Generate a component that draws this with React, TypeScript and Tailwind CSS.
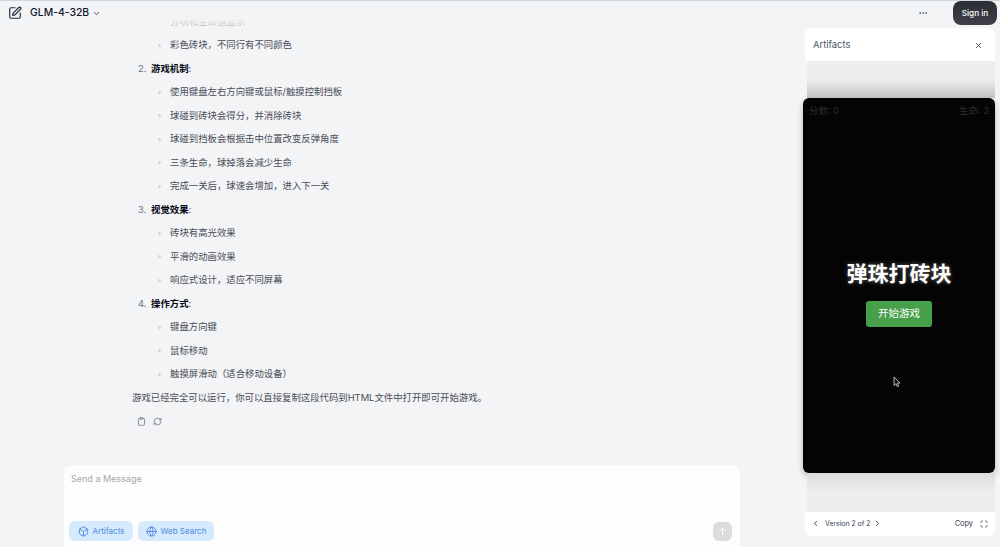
import React from 'react';
import { SquarePen, ChevronDown, ChevronLeft, ChevronRight, Ellipsis, X, Maximize, Clipboard, RefreshCw, Box, Globe, ArrowUp } from 'lucide-react';

const font = 'font-["Inter","Noto_Sans_CJK_SC",sans-serif]';

const sections = [
  { title: '游戏机制', items: ['使用键盘左右方向键或鼠标/触摸控制挡板', '球碰到砖块会得分，并消除砖块', '球碰到挡板会根据击中位置改变反弹角度', '三条生命，球掉落会减少生命', '完成一关后，球速会增加，进入下一关'] },
  { title: '视觉效果', items: ['砖块有高光效果', '平滑的动画效果', '响应式设计，适应不同屏幕'] },
  { title: '操作方式', items: ['键盘方向键', '鼠标移动', '触摸屏滑动（适合移动设备）'] },
];

function Bullet({ text }: { text: string }) {
  return (
    <div className="flex items-center h-[23.5px] pl-[26px]">
      <span className="w-[3px] h-[3px] rounded-full bg-gray-300 mr-[9px]" />
      <span className="text-[#484c57]">{text}</span>
    </div>
  );
}

export default function App() {
  return (
    <div className={`${font} w-[1000px] h-[547px] flex overflow-hidden bg-[#f3f4f6] border-t border-gray-300 text-[9.4px]`}>
      <div className="w-[803px] flex flex-col">
        <div className="relative z-10 h-[24px] shrink-0 flex items-center pl-[8px] bg-gradient-to-b from-[#f3f4f6] from-[75%] to-[#f3f4f6]/0">
          <SquarePen className="w-[14px] h-[14px] text-gray-800" />
          <span className="ml-[8px] text-[10.4px] font-medium text-gray-900">GLM-4-32B</span>
          <ChevronDown className="ml-[3px] w-[9px] h-[9px] text-gray-800" />
        </div>

        <div className="flex-1 min-h-0 -mt-[15px] pl-[132px] pr-[30px]">
          <div className="flex items-center h-[23.5px] pl-[38px] opacity-30">
            <span className="text-[#484c57]">方块和生命值显示</span>
          </div>
          <Bullet text="彩色砖块，不同行有不同颜色" />
          {sections.map((s, i) => (
            <div key={s.title}>
              <div className="flex items-center h-[23.5px] pl-[6px] text-[#484c57]">
                <span className="w-[13px] text-gray-500">{i + 2}.</span>
                <span className="font-bold text-gray-950">{s.title}</span>
                <span>:</span>
              </div>
              {s.items.map(item => <Bullet key={item} text={item} />)}
            </div>
          ))}
          <div className="flex items-center h-[23.5px] text-[#484c57]">
            游戏已经完全可以运行，你可以直接复制这段代码到HTML文件中打开即可开始游戏。
          </div>
          <div className="flex items-center gap-[7px] pl-[5px] h-[24px] text-gray-500">
            <Clipboard className="w-[9px] h-[9px]" />
            <RefreshCw className="w-[9px] h-[9px]" />
          </div>
        </div>

        {/* composer */}
        <div className="shrink-0 ml-[64px] mr-[63px] h-[82px] rounded-t-lg bg-[#fdfdfd] flex flex-col justify-between px-[5px] pt-[8px] pb-[6px]">
          <div className="pl-[2px] text-[9px] text-[#a3a7ae] leading-[12px]">Send a Message</div>
          <div className="flex items-center justify-between">
            <div className="flex gap-[5px] text-[8px] text-[#4f88dc]">
              <button className="h-[20px] w-[64px] rounded-md bg-[#d6eafe] flex items-center justify-center gap-[4px]">
                <Box className="w-[11px] h-[11px]" />
                Artifacts
              </button>
              <button className="h-[20px] w-[76px] rounded-md bg-[#d6eafe] flex items-center justify-center gap-[4px]">
                <Globe className="w-[11px] h-[11px]" />
                Web Search
              </button>
            </div>
            <button className="w-[19px] h-[19px] mr-[3px] rounded-md bg-[#dcdcdc] flex items-center justify-center">
              <ArrowUp className="w-[11px] h-[11px] text-white" />
            </button>
          </div>
        </div>
      </div>

      {/* artifacts panel */}
      <div className="w-[197px] flex flex-col relative">
        <div className="h-[26px] shrink-0 flex items-center justify-end gap-[25px] pr-[3px] -mt-[1px]">
          <Ellipsis className="w-[10px] h-[10px] text-gray-600" />
          <button className="w-[44px] h-[24px] rounded-lg bg-gradient-to-b from-[#2b2c33] to-[#3f4048] text-white text-[8.2px] font-medium">Sign in</button>
        </div>
        <div className="h-[33px] shrink-0 ml-[2px] mr-[5px] mt-[2px] pt-[1px] bg-white rounded-t-md flex items-center justify-between pl-[8px] pr-[12px] text-[9.4px] text-gray-600">
          Artifacts
          <X className="w-[9px] h-[9px] text-gray-800" />
        </div>
        <div className="h-[37px] shrink-0 ml-[4px] mr-[5px] bg-gradient-to-b from-[#eeeeee] via-[#eeeeee] to-[#c4c4c4]" />
        <div className="h-[375px] shrink-0 mr-[5px] bg-[#040404] rounded-md flex flex-col text-[#2e2e2e] shadow-[0_3px_6px_rgba(0,0,0,0.25)]">
          <div className="flex justify-between px-[6px] pt-[7px] text-[9.4px] leading-[12px]">
            <span>分数: 0</span>
            <span>生命: 3</span>
          </div>
          <div className="flex flex-col items-center mt-[143px]">
            <div className="text-[21px] leading-[28px] font-bold text-white [text-shadow:0_0_4px_rgba(255,255,255,0.4)]">弹珠打砖块</div>
            <button className="mt-[13px] w-[66px] h-[26px] rounded-[3px] bg-[#46a04a] text-white text-[10.5px]">开始游戏</button>
          </div>
          <svg className="absolute left-[90px] top-[375px]" width="8" height="12" viewBox="0 0 8 12">
            <path d="M1 1v8.5l2-1.8 1.3 3 1.4-.6-1.3-3H7z" fill="#111" stroke="#ddd" strokeWidth="0.8" />
          </svg>
        </div>
        <div className="h-[39px] shrink-0 ml-[4px] mr-[5px] bg-gradient-to-b from-[#dcdcdc] via-[#eeeeee] to-[#eeeeee]" />
        <div className="h-[24px] shrink-0 ml-[2px] mr-[5px] bg-white rounded-b-md flex items-center justify-between pl-[6px] pr-[7px] text-gray-700">
          <div className="flex items-center gap-[3px] text-[6.9px]">
            <ChevronLeft className="w-[9px] h-[9px]" strokeWidth={2.5} />
            <span className="ml-[2px]">Version 2 of 2</span>
            <ChevronRight className="w-[9px] h-[9px]" strokeWidth={2.5} />
          </div>
          <div className="flex items-center gap-[7px] text-[7.4px]">
            Copy
            <Maximize className="w-[8px] h-[8px]" />
          </div>
        </div>
      </div>
    </div>
  );
}
